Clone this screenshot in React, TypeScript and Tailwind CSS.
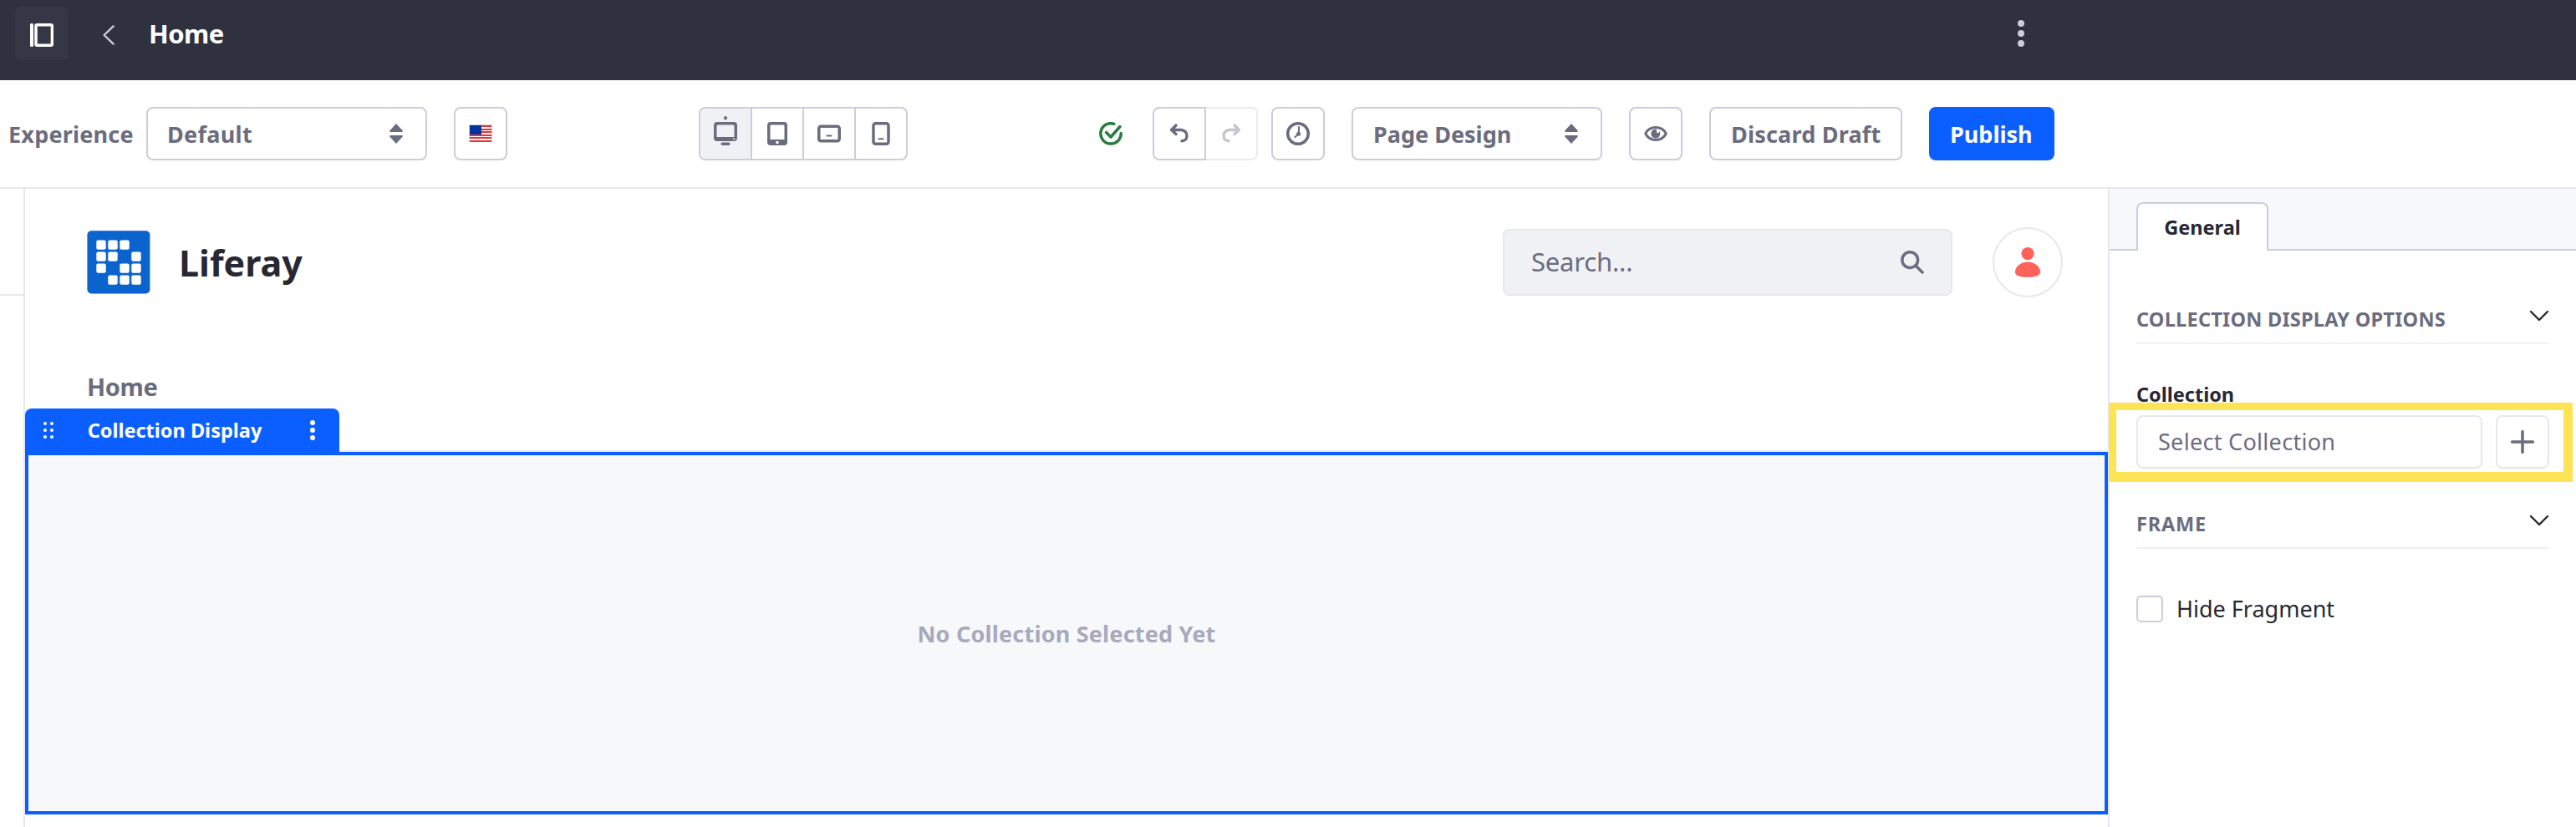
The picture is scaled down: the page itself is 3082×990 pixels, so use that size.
import type { ReactNode } from "react";
import clsx from "clsx";

function Icon({ size = 28, className, children }: { size?: number; className?: string; children: ReactNode }) {
  return (
    <svg width={size} height={size} viewBox={`0 0 ${size} ${size}`} fill="currentColor" className={clsx("block shrink-0", className)}>
      {children}
    </svg>
  );
}

const stroke = {
  fill: "none",
  stroke: "currentColor",
  strokeWidth: 3.5,
  strokeLinecap: "round",
  strokeLinejoin: "round",
} as const;

function Caret({ className }: { className?: string }) {
  return (
    <svg width="16" height="24" viewBox="0 0 16 24" fill="currentColor" className={clsx("block shrink-0", className)}>
      <path d="M8 0 15.8 8.4Q16 10 15 10H1Q0 10 .2 8.4ZM8 24 15.8 15.6Q16 14 15 14H1Q0 14 .2 15.6Z" />
    </svg>
  );
}

function Kebab({ size }: { size: "lg" | "sm" }) {
  return (
    <span className={clsx("flex flex-col", size === "lg" ? "gap-1" : "gap-[3px]")}>
      {[0, 1, 2].map((i) => (
        <span key={i} className={clsx("rounded-full", size === "lg" ? "size-2 bg-[#cdcdd9]" : "size-[6px] bg-white")} />
      ))}
    </span>
  );
}

function Box({ className, children }: { className?: string; children: ReactNode }) {
  return (
    <div className={clsx("flex h-16 shrink-0 items-center border-2 border-[#cdcdd9] bg-white", className)}>{children}</div>
  );
}

function UsFlag() {
  return (
    <svg width="28" height="22" viewBox="0 0 28 22" shapeRendering="crispEdges" className="block">
      <path fill="#cdd0dc" d="M0 0h28v21H0z" />
      <path fill="#fff" d="M1 1h26v20H1z" />
      <path fill="#e53333" d="M1 1h26v2H1zM1 5h26v2H1zM1 8h26v2H1zM1 12h26v2H1zM1 15h26v2H1zM1 19h26v2H1z" />
      <path fill="#0033a0" d="M1 1h14v11H1z" />
    </svg>
  );
}

function Logo() {
  const cells = [
    [0, 0], [1, 0], [2, 0],
    [0, 1], [1, 1], [3, 1],
    [0, 2], [2, 2], [3, 2],
    [1, 3], [2, 3], [3, 3],
  ];
  return (
    <svg width="76" height="76" viewBox="0 0 76 76" className="block shrink-0">
      <rect x=".4" y=".2" width="75" height="75.2" rx="5" fill="#0b63ce" />
      {cells.map(([x, y]) => (
        <rect key={`${x}-${y}`} x={11.3 + x * 14} y={11.4 + y * 14} width="11.4" height="11.4" rx="2" fill="#fff" />
      ))}
    </svg>
  );
}

function TopBar() {
  return (
    <header className="flex h-24 shrink-0 items-start bg-[#30313f] pt-2 pl-[18px]">
      <div className="flex size-16 items-center justify-center rounded-md bg-[#363745]">
        <Icon className="mt-1 text-white">
          <rect x="0" y="0" width="4" height="28" rx="1.5" />
          <rect x="7" y="1.8" width="19.4" height="24.4" rx="1.5" {...stroke} />
        </Icon>
      </div>
      <svg width="14" height="24" viewBox="0 0 14 24" className="mt-[22px] ml-[41px] text-[#cdcdd9]">
        <path d="M12.6 1.4 1.6 12l11 10.6" {...stroke} strokeWidth="2.4" />
      </svg>
      <h1 className="ml-[41px] w-[2236px] text-[31px] leading-[64px] font-bold tracking-[-0.5px] text-white">Home</h1>
      <div className="pt-4">
        <Kebab size="lg" />
      </div>
    </header>
  );
}

function Toolbar() {
  return (
    <div className="flex h-[130px] shrink-0 items-center border-b-2 border-[#e7e7ed] bg-white pl-[10px] text-[27px] font-bold text-[#6b6c7e]">
      <span className="w-[165px] shrink-0 pt-0.5 tracking-[0.2px]">Experience</span>
      <Box className="w-[336px] justify-between rounded-lg pr-[27px] pl-[23px]">
        <span className="pt-0.5 tracking-[0.3px]">Default</span>
        <Caret />
      </Box>
      <Box className="ml-8 w-16 justify-center rounded-lg">
        <UsFlag />
      </Box>

      <div className="ml-[229px] flex h-16 w-[250px] shrink-0 divide-x-2 divide-[#cdcdd9] overflow-hidden rounded-lg border-2 border-[#cdcdd9]">
        <div className="flex w-[62px] justify-center bg-[#f0f1f5] pt-[9px]">
          <svg width="28" height="36" viewBox="0 0 28 36" fill="currentColor">
            <ellipse cx="14" cy="2.2" rx="2" ry="2.2" />
            <path fillRule="evenodd" d="M4 7h20a4 4 0 0 1 4 4v15a4 4 0 0 1-4 4H4a4 4 0 0 1-4-4V11a4 4 0 0 1 4-4ZM5 10.5a1.5 1.5 0 0 0-1.5 1.5v13h21V12a1.5 1.5 0 0 0-1.5-1.5ZM24 26.4a1.1 1.1 0 1 0 0 2.2 1.1 1.1 0 0 0 0-2.2Z" />
            <rect x="8.5" y="31.5" width="11" height="3.6" rx="1.8" />
          </svg>
        </div>
        <div className="flex w-[62px] items-center justify-center">
          <Icon>
            <path fillRule="evenodd" d="M6 0h16a4 4 0 0 1 4 4v20a4 4 0 0 1-4 4H6a4 4 0 0 1-4-4V4a4 4 0 0 1 4-4ZM6.5 3.5a1 1 0 0 0-1 1V21h17V4.5a1 1 0 0 0-1-1ZM14 22.7a1.8 1.8 0 1 0 0 3.6 1.8 1.8 0 0 0 0-3.6Z" />
          </Icon>
        </div>
        <div className="flex w-[62px] items-center justify-center">
          <Icon>
            <rect x="1.75" y="5.25" width="24.5" height="17.5" rx="2.5" {...stroke} />
            <rect x="10.5" y="15.5" width="7" height="2" rx="1" />
          </Icon>
        </div>
        <div className="flex w-[60px] items-center justify-center">
          <Icon>
            <rect x="5" y="1.75" width="18" height="24.5" rx="2.5" {...stroke} />
            <rect x="10.5" y="19.2" width="7" height="2" rx="1" />
          </Icon>
        </div>
      </div>

      <Icon className="ml-[229px] text-[#287d3c]">
        <path d="M17.8 2.3A12.2 12.2 0 1 0 26.2 13.5" {...stroke} />
        <path d="M8.5 12.5l5.5 5.500L25 5.500" {...stroke} />
      </Icon>

      <Box className="ml-9 w-16 justify-center rounded-l-lg">
        <Icon>
          <path d="M10 4 4.500 9.500 10 14.500M5.500 9.500H16a7 7 0 0 1 7 7c0 4-2.500 6.300-6 6.300" {...stroke} strokeWidth="3.4" />
        </Icon>
      </Box>
      <div className="flex h-16 w-[62px] shrink-0 items-center justify-center rounded-r-lg border-2 border-l-0 border-[#ebebf0] text-[#c5c6cd]">
        <Icon>
          <path d="M18 4l5.500 5.500L18 14.500M22.500 9.500H12a7 7 0 0 0-7 7c0 4 2.500 6.300 6 6.300" {...stroke} strokeWidth="3.4" />
        </Icon>
      </div>
      <Box className="ml-4 w-16 justify-center rounded-lg">
        <Icon>
          <circle cx="14" cy="14" r="12.3" {...stroke} />
          <path d="M15 6v8L10.500 18" {...stroke} strokeWidth="2" />
          <circle cx="14.6" cy="14.2" r="2.5" />
        </Icon>
      </Box>
      <Box className="ml-8 w-[300px] justify-between rounded-lg pr-[27px] pl-6">
        <span className="pt-0.5">Page Design</span>
        <Caret />
      </Box>
      <Box className="ml-8 w-16 justify-center rounded-lg">
        <Icon>
          <path d="M1.700 14C4 9.500 8.500 6.600 14 6.600S24 9.500 26.300 14C24 18.500 19.500 21.400 14 21.400S4 18.500 1.700 14Z" {...stroke} strokeWidth="3" />
          <path d="M14 8.600q1.500 0 1 1.600-.6 2.600 1.600 3.100 1.200.1 1.400-1.300.1-1.300.9.100a5.500 5.500 0 1 1-4.900-3.500Z" />
        </Icon>
      </Box>
      <Box className="ml-8 w-[231px] rounded-lg pl-[24px]">
        <span className="pt-0.5 tracking-[0.2px]">Discard Draft</span>
      </Box>
      <div className="ml-8 flex h-16 w-[150px] shrink-0 items-center rounded-lg bg-[#0b5fff] pl-[25px] text-white">
        <span className="pt-0.5">Publish</span>
      </div>
    </div>
  );
}

function SiteHeader() {
  return (
    <div className="flex h-[175px] items-center pl-[74px]">
      <Logo />
      <span className="ml-[34px] w-[1584px] shrink-0 pt-1 text-[43px] font-bold text-[#272833]">Liferay</span>
      <div className="flex h-20 w-[538px] shrink-0 items-center justify-between rounded-lg border-2 border-[#e7e7ed] bg-[#f0f1f5] px-8 text-[31px] text-[#6b6c7e]">
        <span className="tracking-[-0.2px]">Search...</span>
        <Icon>
          <circle cx="11.2" cy="11.2" r="9.4" {...stroke} />
          <path d="M18.500 18.500l7.500 7.500" {...stroke} />
        </Icon>
      </div>
      <div className="ml-12 flex size-[84px] shrink-0 items-center justify-center rounded-full border-2 border-[#e7e7ed]">
        <svg width="32" height="36" viewBox="0 0 32 36" fill="#ff625b" className="mt-px">
          <circle cx="16" cy="7.6" r="7.6" />
          <path d="M16 17.500c8.500 0 15 6 15 12 0 4-4.500 6.300-15 6.300S1 33.500 1 29.500c0-6 6.500-12 15-12Z" />
        </svg>
      </div>
    </div>
  );
}

function Canvas() {
  return (
    <main className="flex w-[2492px] shrink-0 flex-col">
      <SiteHeader />
      <div className="h-[88px] pt-[41px] pl-[74px] text-[29px] leading-[42px] font-bold tracking-[-0.4px] text-[#6b6c7e]">Home</div>
      <div className="flex h-[52px] items-end">
        <div className="flex h-[52px] w-[376px] items-center justify-between rounded-t-lg bg-[#0b5fff] pr-[29px] pl-[22px] text-white">
          <div className="grid grid-cols-2 gap-1">
            {[0, 1, 2, 3, 4, 5].map((i) => (
              <span key={i} className="size-1 rounded-full bg-white" />
            ))}
          </div>
          <span className="mr-[17px] pt-px text-[23.5px] font-bold whitespace-nowrap">Collection Display</span>
          <Kebab size="sm" />
        </div>
        <div className="h-0.5 grow bg-[#e7e7ed]" />
      </div>
      <div className="flex h-[434px] items-center justify-center border-4 border-[#0b5fff] bg-[#f7f8fa] text-[27px] font-bold text-[#a7a9bc]">
        <span className="pt-0.5 tracking-[0.2px]">No Collection Selected Yet</span>
      </div>
    </main>
  );
}

function SectionTitle({ className, children }: { className?: string; children: ReactNode }) {
  return (
    <div className={clsx("flex h-[60px] w-[494px] items-start justify-between border-b-2 border-[#f0f0f5] text-[23.5px] leading-[60px] font-bold text-[#6b6c7e]", className)}>
      {children}
      <svg width="24" height="14" viewBox="0 0 24 14" className="mt-[19px] text-[#272833]">
        <path d="M2 2l10 10L22 2" {...stroke} strokeWidth="2.4" />
      </svg>
    </div>
  );
}

function Sidebar() {
  return (
    <aside className="relative flex w-[560px] shrink-0 flex-col border-l-2 border-[#e7e7ed] bg-white">
      <div className="flex h-[74px] items-end bg-[#f7f8fa]">
        <div className="h-0.5 w-8 bg-[#cdcdd9]" />
        <div className="flex h-[58px] w-[158px] justify-center rounded-t-lg border-2 border-b-0 border-[#cdcdd9] bg-white text-[23.5px] leading-[56px] font-bold text-[#272833]">General</div>
        <div className="h-0.5 grow bg-[#cdcdd9]" />
      </div>
      <div className="flex flex-col pl-8 text-[#272833]">
        <SectionTitle className="mt-[52px]">
          <span className="tracking-[0.25px]">COLLECTION DISPLAY OPTIONS</span>
        </SectionTitle>
        <div className="mt-[38px] h-[47px] text-[23.5px] leading-[44px] font-bold">Collection</div>
        <div className="flex gap-4">
          <div className="flex h-16 w-[414px] items-center rounded-lg border-2 border-[#e7e7ed] pl-6 text-[27px] tracking-[0.3px] text-[#6b6c7e]">Select Collection</div>
          <div className="flex size-16 items-center justify-center rounded-lg border-2 border-[#e7e7ed] text-[#6b6c7e]">
            <Icon>
              <path d="M14 1.700v24.600M1.700 14h24.600" {...stroke} />
            </Icon>
          </div>
        </div>
        <SectionTitle className="mt-9">
          <span className="tracking-[0.8px]">FRAME</span>
        </SectionTitle>
        <label className="mt-[52px] flex items-center text-[27px]">
          <span className="mr-4 size-8 rounded-[5px] border-2 border-[#cdcdd9]" />
          <span>Hide Fragment</span>
        </label>
      </div>
      <div className="pointer-events-none absolute top-[256px] -left-px h-[95px] w-[555px] border-t-[9px] border-r-[11px] border-b-[12px] border-l-[9px] border-[#fde456]" />
    </aside>
  );
}

export default function App() {
  return (
    <div className="flex h-[990px] w-[3082px] flex-col overflow-hidden bg-white font-['Noto_Sans',sans-serif]">
      <TopBar />
      <Toolbar />
      <div className="flex min-h-0 flex-1">
        <div className="w-[30px] shrink-0 border-r-2 border-[#e7e7ed]">
          <div className="h-32 border-b-2 border-[#e7e7ed]" />
        </div>
        <Canvas />
        <Sidebar />
      </div>
    </div>
  );
}
